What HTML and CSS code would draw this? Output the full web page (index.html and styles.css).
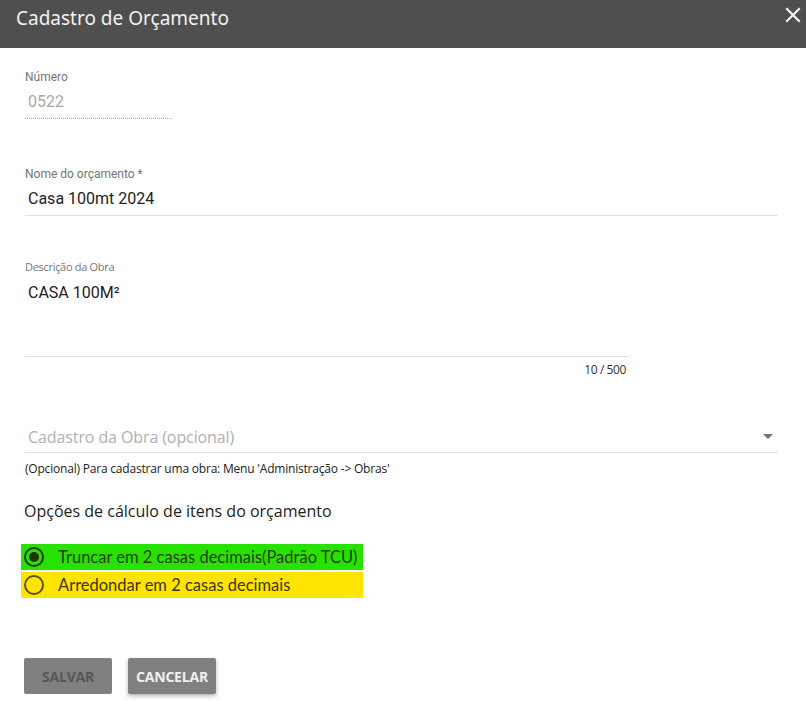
FILE: index.html
```html
<html lang="pt">
<head>
  <meta charset="UTF-8">
  <title>Cadastro de Orçamento</title>
  <link rel="stylesheet" href="styles.css">
</head>
<body>

  <!-- Dialog header -->
  <header class="dialog-header">
    <h1 class="dialog-title">Cadastro de Orçamento</h1>
    <svg class="dialog-close" width="16" height="16" viewBox="0 0 16 16">
      <path d="M2 2 L14 14 M14 2 L2 14" stroke="#f2f2f2" stroke-width="2.2" stroke-linecap="square" />
    </svg>
  </header>

  <!-- Form -->
  <form class="dialog-body">

    <div class="field field-number">
      <label class="field-label">Número</label>
      <div class="field-value disabled">0522</div>
    </div>

    <div class="field field-name">
      <label class="field-label">Nome do orçamento *</label>
      <div class="field-value">Casa 100mt 2024</div>
    </div>

    <div class="field field-desc">
      <label class="field-label narrow">Descrição da Obra</label>
      <div class="field-value textarea">CASA 100M²</div>
      <div class="field-counter">10 / 500</div>
    </div>

    <div class="field field-select">
      <div class="select-row">
        <span class="select-placeholder">Cadastro da Obra (opcional)</span>
        <span class="select-arrow"></span>
      </div>
      <div class="field-hint">(Opcional) Para cadastrar uma obra: Menu 'Administração -&gt; Obras'</div>
    </div>

    <div class="options-title">Opções de cálculo de itens do orçamento</div>

    <div class="radio-group">
      <div class="radio-item checked">
        <span class="radio-circle"></span>
        <span class="radio-label">Truncar em 2 casas decimais(Padrão TCU)</span>
      </div>
      <div class="radio-item rounded">
        <span class="radio-circle"></span>
        <span class="radio-label">Arredondar em 2 casas decimais</span>
      </div>
    </div>

    <div class="actions">
      <button type="button" class="btn btn-disabled">SALVAR</button>
      <button type="button" class="btn btn-cancel">CANCELAR</button>
    </div>

  </form>

</body>
</html>
```

FILE: styles.css
```css
html,
body {
  background-color: #fff;
  margin: 0;
  font-family: Roboto, "Liberation Sans", sans-serif;
  color: #222;
}

.dialog-header {
  background-color: #4f4f4f;
  height: 48px;
  display: flex;
  align-items: flex-start;
  justify-content: space-between;
  padding: 0 5px 0 16px;
}

.dialog-title {
  margin: 0;
  padding-top: 5px;
  color: #f2f2f2;
  font-family: "Noto Sans", "Open Sans", sans-serif;
  font-size: 19px;
  font-weight: 400;
  line-height: 26px;
}

.dialog-close {
  margin-top: 7px;
}

.dialog-body {
  padding: 0 28px 0 25px;
  margin: 0;
}

.field {
  position: relative;
}

.field-label {
  display: block;
  font-size: 12px;
  color: #757575;
  line-height: 14px;
}

.field-label.narrow {
  font-family: "Open Sans", sans-serif;
  font-size: 11px;
  letter-spacing: -0.3px;
}

.field-value {
  font-size: 16px;
  line-height: 20px;
  color: #222;
  padding: 8px 0 6px 3px;
  border-bottom: 1px solid #e0e0e0;
}

.field-value.disabled {
  color: #a8a8a8;
  width: 144px;
  border-bottom: 1px dotted #b0b0b0;
}

.field-number {
  padding-top: 22px;
}

.field-name {
  padding-top: 48px;
}

.field-desc {
  padding-top: 44px;
  width: 603px;
}

.field-value.textarea {
  height: 67px;
  padding-top: 9px;
}

.field-counter {
  text-align: right;
  font-family: "Open Sans", sans-serif;
  font-size: 12px;
  letter-spacing: -0.4px;
  color: #333;
  padding-top: 4px;
  padding-right: 2px;
}

.field-select {
  padding-top: 46px;
}

.select-row {
  display: flex;
  justify-content: space-between;
  align-items: center;
  border-bottom: 1px solid #e0e0e0;
  height: 28px;
  padding-left: 3px;
}

.select-placeholder {
  font-family: "Open Sans", sans-serif;
  font-size: 16px;
  letter-spacing: -0.1px;
  color: #b0b0b0;
  margin-top: -3px;
}

.select-arrow {
  width: 0;
  height: 0;
  border-left: 5px solid transparent;
  border-right: 5px solid transparent;
  border-top: 5px solid #757575;
  margin-right: 5px;
  margin-top: -3px;
}

.field-hint {
  font-family: "Open Sans", sans-serif;
  font-size: 12px;
  letter-spacing: -0.2px;
  line-height: 16px;
  color: #222;
  padding-top: 8px;
}

.options-title {
  font-family: "Open Sans", sans-serif;
  font-size: 16px;
  color: #222;
  padding-top: 23px;
  margin-left: -1px;
}

.radio-group {
  padding-top: 22px;
  margin-left: -4px;
  display: flex;
  flex-direction: column;
  gap: 2px;
  width: 342px;
}

.radio-item {
  display: flex;
  align-items: center;
  height: 26px;
  gap: 14px;
  padding-left: 3px;
  white-space: nowrap;
}

.radio-item.checked {
  background-color: #27e200;
}

.radio-item.rounded {
  background-color: #ffe400;
}

.radio-circle {
  box-sizing: border-box;
  width: 20px;
  height: 20px;
  border: 2px solid #1f3300;
  border-radius: 50%;
  position: relative;
  flex-shrink: 0;
}

.radio-item.rounded .radio-circle {
  border-color: #5c5200;
}

.radio-item.checked .radio-circle::after {
  content: "";
  position: absolute;
  left: 3px;
  top: 3px;
  width: 10px;
  height: 10px;
  border-radius: 50%;
  background-color: #1f3300;
}

.radio-label {
  font-family: Lato, "Open Sans", sans-serif;
  font-size: 16.5px;
  color: #2b3b10;
}

.radio-item.rounded .radio-label {
  color: #3d3600;
}

.actions {
  padding-top: 60px;
  display: flex;
  gap: 16px;
  margin-left: -1px;
}

.btn {
  width: 88px;
  height: 36px;
  border: none;
  border-radius: 2px;
  background-color: #808080;
  font-family: "Open Sans", sans-serif;
  font-size: 14px;
  font-weight: 700;
  letter-spacing: -0.2px;
}

.btn-disabled {
  color: #575757;
}

.btn-cancel {
  color: #f0f0f0;
  box-shadow: 0 2px 4px rgba(0, 0, 0, 0.3);
}
```
